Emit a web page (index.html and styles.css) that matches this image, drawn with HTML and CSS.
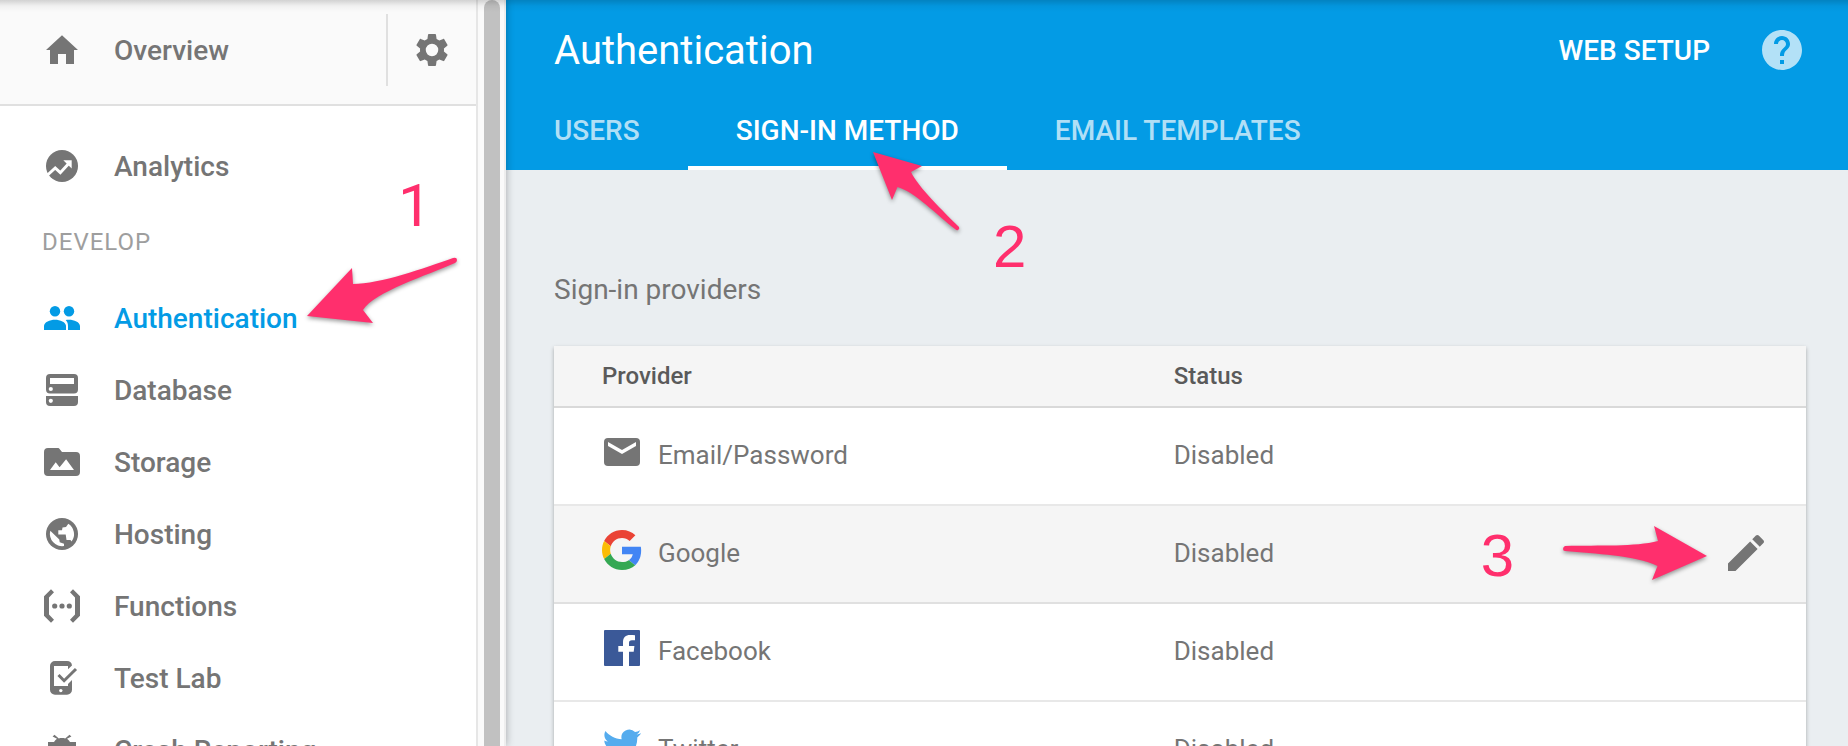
FILE: index.html
```html
<!DOCTYPE html>
<html lang="en">
<head>
<meta charset="utf-8">
<title>Authentication</title>
<link rel="stylesheet" href="styles.css">
</head>
<body>
<div class="app">
  <aside class="sidebar">
    <div class="panel">
      <div class="overview">
        <a class="nav-item" href="#overview">
          <svg class="icon" viewBox="0 0 36 36" aria-hidden="true"><path d="M18 3.200 2 18h4v14h8V22h8v10h8V18h4z"/></svg>
          <span>Overview</span>
        </a>
        <button class="settings" type="button" aria-label="Settings">
          <svg class="icon" viewBox="0.75 0.75 22.5 22.5" aria-hidden="true"><path d="M19.43 12.98c.04-.32.07-.64.07-.98s-.03-.66-.07-.98l2.110-1.650c.19-.15.24-.42.12-.64l-2-3.460c-.12-.22-.39-.3-.61-.22l-2.490 1c-.52-.4-1.080-.73-1.690-.98l-.38-2.650C14.460 2.180 14.250 2 14 2h-4c-.25 0-.46.18-.49.42l-.38 2.650c-.61.25-1.170.59-1.690.98l-2.490-1c-.23-.09-.49 0-.61.22l-2 3.460c-.13.22-.07.49.12.64l2.110 1.650c-.04.32-.07.65-.07.98s.03.66.07.98l-2.110 1.650c-.19.15-.24.42-.12.64l2 3.460c.12.22.39.3.61.22l2.490-1c.52.4 1.080.73 1.690.98l.38 2.650c.03.24.24.42.49.42h4c.25 0 .46-.18.49-.42l.38-2.650c.61-.25 1.170-.59 1.690-.98l2.490 1c.23.09.49 0 .61-.22l2-3.460c.12-.22.07-.49-.12-.64l-2.110-1.650zM12 15.900a3.900 3.900 0 1 1 0-7.800a3.900 3.900 0 0 1 0 7.800z"/></svg>
        </button>
      </div>
      <nav class="menu">
        <a class="nav-item" href="#analytics">
          <svg class="icon" viewBox="0 0 36 36" aria-hidden="true"><circle cx="18" cy="18" r="16"/><path class="knock-line" d="M2.500 28 11.200 20l5.100 4.700 8-8.700"/><path class="knock" d="M19.300 12.200h8.400v8.200z"/></svg>
          <span>Analytics</span>
        </a>
        <h2 class="section">DEVELOP</h2>
        <a class="nav-item active" href="#authentication" aria-current="page">
          <svg class="icon" viewBox="0 0 36 36" aria-hidden="true"><circle cx="11" cy="11.200" r="5.200"/><circle cx="25" cy="11.200" r="5.200"/><path d="M0 30v-4c0-4 6-6.300 11-6.300s11 2.300 11 6.300v4z"/><path d="M21.700 20c1-.2 2.300-.3 3.300-.3 5 0 11 2.300 11 6.300v4H24v-4c0-2.800-.9-4.600-2.300-6z"/></svg>
          <span>Authentication</span>
        </a>
        <a class="nav-item" href="#database">
          <svg class="icon" viewBox="0 0 36 36" aria-hidden="true"><path fill-rule="evenodd" d="M6 2h24a4 4 0 0 1 4 4v11.500a4 4 0 0 1-4 4H6a4 4 0 0 1-4-4V6a4 4 0 0 1 4-4zM6 6v6h24V6zM2 24h32v6a4 4 0 0 1-4 4H6a4 4 0 0 1-4-4z"/><circle class="knock" cx="6.800" cy="17" r="2.100"/><circle class="knock" cx="6.800" cy="28.800" r="2.100"/></svg>
          <span>Database</span>
        </a>
        <a class="nav-item" href="#storage">
          <svg class="icon" viewBox="0 0 36 36" aria-hidden="true"><path d="M4 4h9.500c1.200 0 1.800.6 2.300 1.200L18 8h14a4 4 0 0 1 4 4v16a4 4 0 0 1-4 4H4a4 4 0 0 1-4-4V8a4 4 0 0 1 4-4z"/><path class="knock" d="m6 26 5.700-7.700 3.900 4.900 6.500-8L30 26z"/></svg>
          <span>Storage</span>
        </a>
        <a class="nav-item" href="#hosting">
          <svg class="icon" viewBox="0 0 36 36" aria-hidden="true"><circle cx="18" cy="18" r="16"/><path class="knock" d="M6.300 14.800 15.300 23.500l.4 2.800 4.300 1.500V30A12.200 12.200 0 0 1 6.300 14.800z"/><path class="knock" d="M24.300 7.700A12.200 12.200 0 0 1 27.500 25.500L26.500 24H22.500L21.700 18.500H14.300V14.200H18L18.500 11.500 22 11z"/></svg>
          <span>Hosting</span>
        </a>
        <a class="nav-item" href="#functions">
          <svg class="icon" viewBox="0 0 36 36" aria-hidden="true"><path d="m7 1.300 3 3-5 5.200v17l5 5.200-3 3-7-7V8.300zM29 1.300l-3 3 5 5.200v17l-5 5.200 3 3 7-7V8.300z"/><circle cx="10.700" cy="18" r="2.600"/><circle cx="18" cy="18" r="2.600"/><circle cx="25.300" cy="18" r="2.600"/></svg>
          <span>Functions</span>
        </a>
        <a class="nav-item" href="#test-lab">
          <svg class="icon" viewBox="0 0 36 36" aria-hidden="true"><path d="M11 1h12a5 5 0 0 1 5 4.500L24 9.300V6H10v20h14v-2l4-4v9.700a5 5 0 0 1-5 5H11a5 5 0 0 1-5-5V6a5 5 0 0 1 5-5z"/><path class="check" d="m14.500 15 5.600 5.700L32 9"/><circle class="knock" cx="16.800" cy="30.600" r="1.700"/></svg>
          <span>Test Lab</span>
        </a>
        <a class="nav-item" href="#crash-reporting">
          <svg class="icon" viewBox="0 0 36 36" aria-hidden="true"><path d="M4 10h6c.7-1.300 1.700-2.400 3-3.200L8.600 4.600l1.900-1.900 4.300 3.700c2-.5 4.400-.5 6.400 0l4.300-3.700 1.900 1.900L23 6.800c1.300.8 2.300 1.900 3 3.200h6v4h-4.200v3H32v4h-4.200v3H32v4h-5.600C25 31.200 21.800 33 18 33s-7-1.800-8.400-5H4v-4h4.200v-3H4v-4h4.200v-3H4z"/></svg>
          <span>Crash Reporting</span>
        </a>
      </nav>
      <div class="note note-1">
        <span class="digit plain">1</span>
        <svg class="arrow" width="160" height="80" viewBox="300 250 160 80" aria-hidden="true"><path d="M307 316 352 268 353 284C380 284 425 268 453 258Q457 257 457 260Q457 262 455 263C428 275 374 292 363 310L373 323z"/></svg>
      </div>
    </div>
    <div class="scroll-track"><div class="scroll-thumb"></div></div>
  </aside>

  <main class="main">
    <header class="topbar">
      <div class="title-row">
        <h1 class="title">Authentication</h1>
        <button class="setup" type="button">WEB SETUP</button>
        <button class="help" type="button" aria-label="Help">
          <svg viewBox="0 0 24 24" aria-hidden="true"><path d="M12 2C6.480 2 2 6.480 2 12s4.480 10 10 10 10-4.480 10-10S17.520 2 12 2zm1 17h-2v-2h2v2zm2.070-7.750l-.9.920C13.450 12.900 13 13.500 13 15h-2v-.5c0-1.100.45-2.100 1.170-2.830l1.240-1.260c.37-.36.59-.86.59-1.410 0-1.100-.9-2-2-2s-2 .9-2 2H8c0-2.210 1.790-4 4-4s4 1.790 4 4c0 .88-.36 1.680-.93 2.250z"/></svg>
        </button>
      </div>
      <nav class="tabs">
        <a class="tab" href="#users">USERS</a>
        <a class="tab selected" href="#sign-in-method" aria-current="page">SIGN-IN METHOD</a>
        <a class="tab" href="#email-templates">EMAIL TEMPLATES</a>
      </nav>
    </header>
    <div class="note note-2">
      <svg class="arrow" width="100" height="90" viewBox="866 145 100 90" aria-hidden="true"><path d="M873 152 922 166 911 172C918 187 944 212 959 227Q960 229 958 230Q957 231 955 229C938 216 915 192 897.500 187L892 200z"/></svg>
      <span class="digit">2</span>
    </div>
    <section class="content">
      <h2 class="heading">Sign-in providers</h2>
      <table class="providers">
        <thead>
          <tr><th class="col-provider" scope="col">Provider</th><th scope="col">Status</th></tr>
        </thead>
        <tbody>
          <tr>
            <td><div class="provider">
              <svg class="logo" viewBox="0 0 40 40" aria-hidden="true"><rect x="2" y="6" width="36" height="28" rx="4"/><path class="knock" d="m6 10 14 8L34 10v4l-14 8-14-8z"/></svg>
              <span>Email/Password</span></div></td>
            <td>Disabled</td>
          </tr>
          <tr class="hovered">
            <td><div class="provider">
              <svg class="logo" viewBox="0 0 48 48" aria-hidden="true"><path fill="#ea4335" d="M24 9.500c3.540 0 6.710 1.220 9.210 3.600l6.850-6.850C35.900 2.380 30.470 0 24 0 14.620 0 6.510 5.380 2.560 13.220l7.980 6.190C12.430 13.720 17.740 9.500 24 9.500z"/><path fill="#4285f4" d="M46.980 24.550c0-1.570-.15-3.090-.38-4.550H24v9.020h12.940c-.58 2.960-2.260 5.480-4.780 7.180l7.730 6c4.510-4.180 7.090-10.360 7.090-17.650z"/><path fill="#fbbc05" d="M10.530 28.590c-.48-1.450-.76-2.990-.76-4.590s.27-3.140.76-4.590l-7.980-6.190C.92 16.460 0 20.120 0 24c0 3.880.92 7.540 2.560 10.780l7.970-6.190z"/><path fill="#34a853" d="M24 48c6.480 0 11.930-2.130 15.890-5.810l-7.730-6c-2.150 1.450-4.920 2.300-8.160 2.300-6.260 0-11.570-4.220-13.470-9.910l-7.980 6.190C6.510 42.620 14.620 48 24 48z"/></svg>
              <span>Google</span></div></td>
            <td>
              <div class="status">
                <span>Disabled</span>
                <button class="edit" type="button" aria-label="Edit Google provider">
                  <svg viewBox="0 0 24 24" aria-hidden="true"><path d="M3 17.250V21h3.750L17.810 9.940l-3.750-3.750L3 17.250zM20.710 7.040c.39-.39.39-1.020 0-1.410l-2.340-2.340c-.39-.39-1.020-.39-1.410 0l-1.830 1.830 3.750 3.750 1.830-1.830z"/></svg>
                </button>
                <div class="note note-3">
                  <span class="digit">3</span>
                  <svg class="arrow" width="160" height="66" viewBox="1556 521 160 66" aria-hidden="true"><path d="M1707 557 1654 527 1658 542C1635 548 1600 546 1565 547Q1563 548 1563 550Q1563 552 1565 552C1595 555 1635 556 1657.500 567L1652 581z"/></svg>
                </div>
              </div>
            </td>
          </tr>
          <tr>
            <td><div class="provider">
              <svg class="logo" viewBox="0 0 40 40" aria-hidden="true"><rect x="2" y="2" width="36" height="36" rx="1" fill="#3b5998"/><path fill="#fff" d="M21 38V23.700h-4.700V18H21v-4c0-4.500 2.800-7 7-7 2 0 3.700.1 5 .3v5h-3c-2.200 0-3 1-3 2.700v3h5.400l-.7 5.700H27V38z"/></svg>
              <span>Facebook</span></div></td>
            <td>Disabled</td>
          </tr>
          <tr>
            <td><div class="provider">
              <svg class="logo" viewBox="-0.5 0 25 25" aria-hidden="true"><path fill="#55acee" d="M23.953 4.570a10 10 0 01-2.825.775 4.958 4.958 0 002.163-2.723c-.951.555-2.005.959-3.127 1.184a4.920 4.920 0 00-8.384 4.482C7.690 8.095 4.067 6.130 1.640 3.162a4.822 4.822 0 00-.666 2.475c0 1.710.87 3.213 2.188 4.096a4.904 4.904 0 01-2.228-.616v.06a4.923 4.923 0 003.946 4.827 4.996 4.996 0 01-2.212.085 4.936 4.936 0 004.604 3.417 9.867 9.867 0 01-6.102 2.105c-.39 0-.779-.023-1.170-.067a13.995 13.995 0 007.557 2.209c9.053 0 13.998-7.496 13.998-13.985 0-.21 0-.42-.015-.63A9.935 9.935 0 0024 4.590z"/></svg>
              <span>Twitter</span></div></td>
            <td>Disabled</td>
          </tr>
        </tbody>
      </table>
    </section>
  </main>
</div>
</body>
</html>
```

FILE: styles.css
```css
* {
  box-sizing: border-box;
}

body {
  margin: 0;
  font-family: Roboto, "Liberation Sans", sans-serif;
  font-size: 28px;
  color: #757575;
  background: #eaeef1;
}

h1,
h2 {
  margin: 0;
  font-weight: 400;
}

a {
  color: inherit;
  text-decoration: none;
}

button {
  padding: 0;
  border: 0;
  background: none;
  font: inherit;
  color: inherit;
  cursor: pointer;
}

svg {
  display: block;
  fill: currentColor;
}

.app {
  position: relative;
  display: flex;
  height: 100vh;
  overflow: hidden;
}

/* shadow cast by the bar above the page */
.app::after {
  content: "";
  position: absolute;
  z-index: 2;
  inset: 0 0 auto;
  height: 12px;
  background: linear-gradient(rgba(0, 0, 0, 0.16), rgba(0, 0, 0, 0.04) 50%, transparent);
  pointer-events: none;
}

/* Sidebar */
.sidebar {
  position: relative;
  z-index: 1;
  display: flex;
  flex: none;
  box-shadow: 0 0 8px rgba(0, 0, 0, 0.3);
}

.panel {
  position: relative;
  width: 478px;
  border-right: 2px solid #e6e6e6;
  background: #fff;
}

.overview {
  display: flex;
  align-items: center;
  height: 106px;
  padding-bottom: 4px;
  border-bottom: 2px solid #e0e0e0;
  background: #fafafa;
}

.overview .nav-item {
  flex: 1;
}

.settings {
  display: flex;
  align-items: center;
  justify-content: center;
  width: 90px;
  height: 72px;
  border-left: 2px solid #e0e0e0;
}

.menu {
  padding-top: 24px;
}

.nav-item {
  display: flex;
  align-items: center;
  gap: 34px;
  height: 72px;
  padding-left: 44px;
  font-weight: 500;
  white-space: nowrap;
}

.nav-item.active {
  color: #039be5;
}

.icon {
  flex: none;
  width: 36px;
  height: 36px;
}

.knock {
  fill: #fff;
}

.knock-line {
  fill: none;
  stroke: #fff;
  stroke-width: 3;
}

.check {
  fill: none;
  stroke: currentColor;
  stroke-width: 3;
}

.section {
  height: 80px;
  padding-left: 42px;
  font-size: 24px;
  line-height: 80px;
  letter-spacing: 1px;
  color: #9e9e9e;
}

.scroll-track {
  width: 28px;
  padding: 0 4px 0 6px;
  border-right: 2px solid #eee;
  background: #fafafa;
}

.scroll-thumb {
  width: 16px;
  height: 100%;
  border-radius: 8px 8px 0 0;
  background: #c1c1c1;
}

/* Main column */
.main {
  position: relative;
  flex: 1;
  min-width: 0;
}

.topbar {
  color: #fff;
  background: #039be5;
}

.title-row {
  display: flex;
  align-items: center;
  height: 100px;
  padding: 0 42px 0 48px;
}

.title {
  flex: 1;
  font-size: 40px;
}

.setup {
  font-weight: 500;
}

.help {
  width: 48px;
  margin-left: 48px;
  color: rgba(255, 255, 255, 0.7);
}

.tabs {
  display: flex;
  height: 70px;
}

.tab {
  padding: 0 48px;
  border-bottom: 4px solid transparent;
  font-weight: 500;
  line-height: 62px;
  color: rgba(255, 255, 255, 0.7);
  white-space: nowrap;
}

.tab.selected {
  border-color: #fff;
  color: #fff;
}

.content {
  padding: 96px 42px 0 48px;
}

.heading {
  padding-bottom: 32px;
  font-size: 28px;
  line-height: 48px;
}

.providers {
  width: 100%;
  border-spacing: 0;
  table-layout: fixed;
  background: #fff;
  box-shadow: 0 2px 4px rgba(0, 0, 0, 0.3);
  font-size: 26px;
  text-align: left;
}

.providers th {
  height: 62px;
  padding: 0;
  border-bottom: 2px solid #d9d9d9;
  background: #f5f5f5;
  font-size: 24px;
  font-weight: 500;
  color: #5a5a5a;
}

.providers .col-provider {
  width: 49.5%;
}

.providers td {
  height: 98px;
  padding: 0 0 2px;
  border-bottom: 2px solid #e8e8e8;
}

.providers th:first-child,
.providers td:first-child {
  padding-left: 48px;
}

.providers .hovered td {
  border-color: #e0e0e0;
  background: #f5f5f5;
}

.provider {
  display: flex;
  align-items: center;
  gap: 16px;
}

.logo {
  width: 40px;
  height: 40px;
  margin-bottom: 6px;
}

.status {
  position: relative;
  display: flex;
  align-items: center;
  justify-content: space-between;
  padding-right: 36px;
}

.edit {
  width: 48px;
}

/* Numbered callouts */
.note {
  position: absolute;
  display: flex;
  color: #ff2f6d;
  pointer-events: none;
}

.digit {
  font-family: "Liberation Sans", Arial, sans-serif;
  font-size: 60px;
  line-height: 60px;
}

.digit.plain {
  font-family: Roboto, sans-serif;
}

.arrow {
  filter: drop-shadow(0 2px 2px rgba(0, 0, 0, 0.4));
}

.note-1 {
  top: 176px;
  left: 300px;
  flex-direction: column;
  gap: 14px;
}

.note-1 .digit {
  padding-left: 98px;
}

.note-2 {
  top: 145px;
  left: 360px;
  align-items: flex-end;
  gap: 27px;
  height: 132px;
}

.note-2 .arrow {
  align-self: flex-start;
}

.note-3 {
  right: 90px;
  align-items: center;
  gap: 42px;
}

.note-3 .digit {
  padding-top: 6px;
}
```
